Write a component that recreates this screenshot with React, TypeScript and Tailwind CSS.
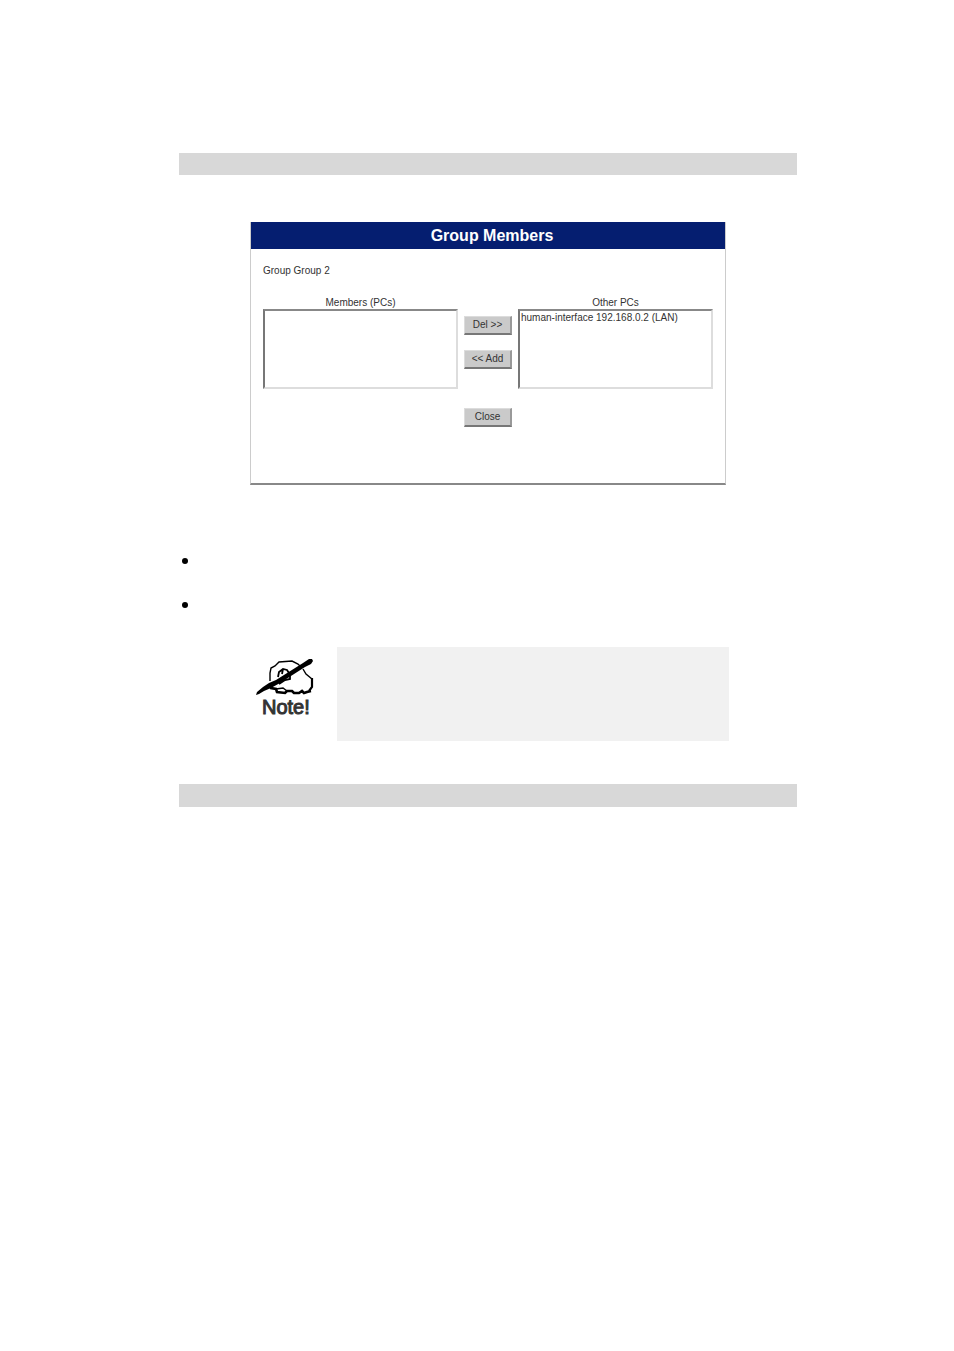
import type { ReactNode } from "react";

const otherPcs = ["human-interface 192.168.0.2 (LAN)"];

function Bar({ className }: { className: string }) {
  return <div className={`bg-[#d8d8d8] ${className}`} />;
}

function PanelButton({ children }: { children: ReactNode }) {
  return (
    <button
      type="button"
      className="h-[19px] w-12 border-t border-r-2 border-b-2 border-l border-t-[#dcdcdc] border-r-[#999] border-b-[#777] border-l-[#dcdcdc] bg-[#cacaca] text-center text-[10px] leading-4 text-[#333]"
    >
      {children}
    </button>
  );
}

function PcList({ id, label, items }: { id: string; label: string; items: string[] }) {
  return (
    <div className="flex flex-1 flex-col">
      <label htmlFor={id} className="text-center leading-3">
        {label}
      </label>
      <select
        id={id}
        size={5}
        className="h-20 w-full appearance-none overflow-hidden border-2 border-t-[#888] border-r-[#ddd] border-b-[#ddd] border-l-[#777] bg-white pt-px text-[10px] leading-3"
      >
        {items.map((pc) => (
          <option key={pc} className="min-h-0 p-0 pl-px leading-3">
            {pc}
          </option>
        ))}
      </select>
    </div>
  );
}

function NoteIcon() {
  return (
    <svg viewBox="0 0 58 38" className="h-[38px] w-[58px]" fill="none" stroke="#000" aria-hidden>
      {/* back of the hand */}
      <path d="M14 22 V14 L15 9 L19 7 L23 3 L36 2 L42 5 L45 8" strokeWidth="1.4" />
      <path d="M47 10 L50 15 L56 20" strokeWidth="1.4" />
      <path d="M56 19 V28 L53 32" strokeWidth="2.2" />
      {/* fingers round the pen */}
      <path d="M22 18 L23 13 L27 10 L31 11 L33 14 M27 10 L26 15 M34 15 V20 L29 21 L23 25" strokeWidth="1.8" />
      {/* underside */}
      <path
        d="M13 25 L15 29 L20 30 L21 33 L29 34 L31 32 L36 32 L38 34 L43 34 L46 32 L48 34 L51 33 L55 32"
        strokeWidth="2.6"
      />
      <path d="M20 30 L27 29 L31 32" strokeWidth="1.4" />
      {/* pen */}
      <path
        d="M0 36 L1 33 L7 28 L13 24 L20 21 L47 4 L53 0 L56 0 L57 2 L55 5 L49 8 L24 24 L15 29 L8 32 L3 35 Z"
        fill="#000"
        stroke="none"
      />
    </svg>
  );
}

export default function App() {
  return (
    <main className="bg-white pt-[153px] pr-[157px] pl-[179px] font-['Liberation_Sans',Arial,sans-serif]">
      <Bar className="h-[22px]" />

      {/* dialog */}
      <section className="mt-[47px] mr-[71px] ml-[71px] border-r border-b-2 border-l border-r-[#ccc] border-b-[#888] border-l-[#ccc] text-[10px] text-[#333]">
        <h1 className="bg-[#051e70] pl-2 text-center text-base leading-[27px] font-bold text-white">
          Group Members
        </h1>
        <div className="px-3 pt-4 pb-14">
          <p className="leading-3">Group Group 2</p>
          <div className="mt-5 flex gap-1.5">
            <PcList id="members" label="Members (PCs)" items={[]} />
            <div className="flex flex-col gap-[15px] pt-[19px]">
              <PanelButton>Del &gt;&gt;</PanelButton>
              <PanelButton>&lt;&lt; Add</PanelButton>
            </div>
            <PcList id="others" label="Other PCs" items={otherPcs} />
          </div>
          <div className="mt-[19px] flex justify-center">
            <PanelButton>Close</PanelButton>
          </div>
        </div>
      </section>

      <ul className="mt-[73px] ml-[3px] space-y-[38px]">
        <li className="size-1.5 rounded-full bg-black" />
        <li className="size-1.5 rounded-full bg-black" />
      </ul>

      {/* note */}
      <section className="mt-[39px] mr-[68px] ml-[77px] flex">
        <div className="flex w-[81px] flex-col pt-3">
          <NoteIcon />
          <p className="pl-1.5 text-xl leading-5 text-[#333] [-webkit-text-stroke:1px_#333]">Note!</p>
        </div>
        <div className="h-[94px] flex-1 bg-[#f1f1f1]" />
      </section>

      <Bar className="mt-[43px] h-[23px]" />
    </main>
  );
}
